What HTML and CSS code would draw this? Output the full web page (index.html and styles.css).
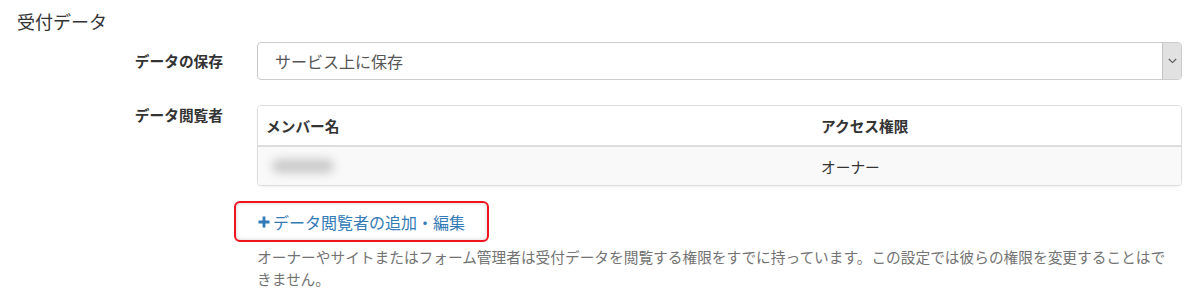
FILE: index.html
```html
<!DOCTYPE html>
<html lang="ja">
<head>
<meta charset="utf-8">
<link rel="stylesheet" href="styles.css">
</head>
<body>
<h2 class="section-title">受付データ</h2>
<div class="form-row first">
  <label class="form-label middle">データの保存</label>
  <div class="select">
    <span class="select-value">サービス上に保存</span>
    <span class="select-btn">
      <svg width="9" height="6" viewBox="0 0 9 6"><path d="M0.8 1 L4.5 4.6 L8.2 1" fill="none" stroke="#555" stroke-width="1.1"/></svg>
    </span>
  </div>
</div>
<div class="form-row second">
  <label class="form-label">データ閲覧者</label>
  <div class="control">
    <div class="table">
      <div class="tr head">
        <div class="td c1">メンバー名</div>
        <div class="td c2">アクセス権限</div>
      </div>
      <div class="tr body">
        <div class="td c1"><span class="blurred"></span></div>
        <div class="td c2">オーナー</div>
      </div>
    </div>
    <div class="add-wrap">
      <a class="add-link" href="#">
        <svg class="plus" width="12" height="12" viewBox="0 0 12 12"><path d="M4.6 0.5 H7.4 V4.6 H11.5 V7.4 H7.4 V11.5 H4.6 V7.4 H0.5 V4.6 H4.6 Z" fill="#337ab7"/></svg>
        <span>データ閲覧者の追加・編集</span>
      </a>
    </div>
    <p class="help">オーナーやサイトまたはフォーム管理者は受付データを閲覧する権限をすでに持っています。この設定では彼らの権限を変更することはできません。</p>
  </div>
</div>
</body>
</html>
```

FILE: styles.css
```css
html, body {
  margin: 0;
  padding: 0;
  background: #fff;
}
body {
  font-family: "Noto Sans CJK JP", "Noto Sans", sans-serif;
  color: #333;
  width: 1200px;
}
.section-title {
  margin: 0;
  padding: 8px 0 0 17px;
  font-size: 18px;
  line-height: 26px;
  font-weight: normal;
  color: #333;
}
.form-row {
  display: grid;
  grid-template-columns: 223px 925px;
  column-gap: 34px;
}
.form-row.first {
  margin-top: 8px;
  align-items: center;
}
.form-row.second {
  margin-top: 25px;
  align-items: start;
}
.form-label {
  text-align: right;
  font-weight: bold;
  font-size: 14.7px;
  line-height: 20px;
  color: #333;
}
.select {
  height: 38px;
  box-sizing: border-box;
  border: 1px solid #ccc;
  border-radius: 4px;
  display: flex;
  align-items: stretch;
  overflow: hidden;
  background: #fff;
}
.select-value {
  flex: 1;
  display: flex;
  align-items: center;
  padding-left: 17px;
  font-size: 16px;
  color: #555;
}
.select-btn {
  width: 18px;
  background: #e1e1e1;
  border-left: 1px solid #c3c3c3;
  display: flex;
  align-items: center;
  justify-content: center;
}
.control {
  display: flex;
  flex-direction: column;
}
.table {
  border: 1px solid #ddd;
  border-radius: 4px;
  box-shadow: 0 1px 2px rgba(0,0,0,0.06);
  overflow: hidden;
}
.tr {
  display: grid;
  grid-template-columns: 555px 1fr;
}
.tr.head {
  height: 39px;
  border-bottom: 2px solid #ddd;
  font-weight: bold;
  background: #fff;
}
.tr.body {
  height: 38px;
  background: #f9f9f9;
}
.td {
  display: flex;
  align-items: center;
  padding-left: 8px;
  font-size: 14.7px;
}
.blurred {
  display: block;
  width: 62px;
  height: 14px;
  background: #cacaca;
  border-radius: 7px;
  filter: blur(5px);
  margin-left: 6px;
}
.add-wrap {
  margin-top: 15px;
  margin-left: -23px;
  display: flex;
}
.add-link {
  display: inline-flex;
  align-items: center;
  gap: 3px;
  height: 41px;
  width: 255px;
  box-sizing: border-box;
  padding-left: 22px;
  border: 2px solid #f0141e;
  border-radius: 6px;
  box-shadow: inset 0 0 4px rgba(0,0,0,0.18);
  text-decoration: none;
  color: #337ab7;
  font-size: 16px;
}
.plus {
  flex: none;
  margin-top: 1px;
}
.help {
  margin: 4px 0 0;
  padding-right: 12px;
  font-size: 14.7px;
  line-height: 22px;
  color: #737373;
}
```
